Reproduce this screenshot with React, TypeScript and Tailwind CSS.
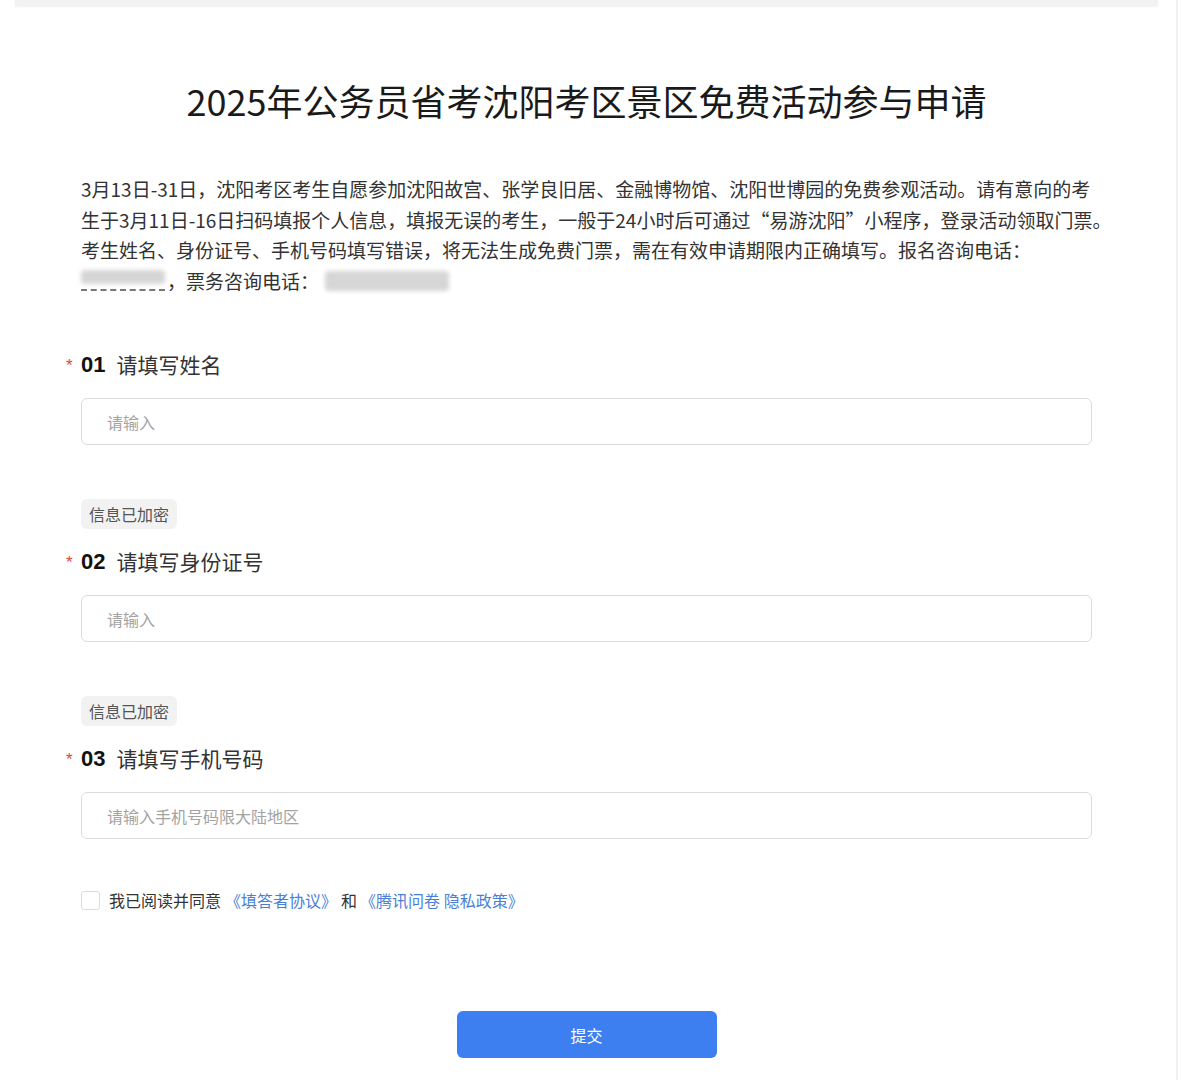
const font = { fontFamily: '"Noto Sans CJK SC", "Noto Sans", sans-serif' };

const Blur = ({ className }: { className: string }) => (
  <span className={`inline-block rounded-sm bg-[#d6d6d6] blur-[2px] align-middle ${className}`} />
);

const Question = ({
  no,
  label,
  placeholder,
  encrypted,
}: {
  no: string;
  label: string;
  placeholder: string;
  encrypted?: boolean;
}) => (
  <div className="flex flex-col">
    {encrypted && (
      <div className="mb-[17px] flex">
        <span className="flex h-[30px] items-center rounded-md bg-[#f2f2f2] px-2 text-[16px] text-[#555]">
          信息已加密
        </span>
      </div>
    )}
    <div className="-ml-[15px] flex h-[30px] items-center">
      <span
        className="mt-[2px] w-[15px] text-[17px] text-[#e0463a]"
        style={{ fontFamily: '"Liberation Sans", sans-serif' }}
      >
        *
      </span>
      <span
        className="mr-[11px] text-[22px] font-bold text-[#111]"
        style={{ fontFamily: '"Liberation Sans", sans-serif' }}
      >
        {no}
      </span>
      <span className="text-[21px] text-[#333]">{label}</span>
    </div>
    <div className="mt-[19px] flex h-[47px] items-center rounded-md border border-[#dcdcdc] px-[25px] text-[16px] text-[#a3a3a3]">
      {placeholder}
    </div>
  </div>
);

export default function App() {
  return (
    <div className="relative min-h-[1080px] w-full bg-white" style={font}>
      <div className="ml-[15px] h-[6px] w-[1143px] bg-[#f2f2f2] shadow-[0_1px_2px_rgba(0,0,0,0.06)]" />
      <div className="absolute right-[3px] top-0 h-full w-[2px] bg-[#efefef]" />

      <div className="mx-[81px] flex w-[1011px] flex-col">
        <h1 className="mt-[68px] text-center text-[36px] leading-[52px] font-normal text-[#1a1a1a]">
          2025年公务员省考沈阳考区景区免费活动参与申请
        </h1>

        <div className="mt-[48px] whitespace-nowrap text-[19px] leading-[30.6px] text-[#333]">
          <div>3月13日-31日，沈阳考区考生自愿参加沈阳故宫、张学良旧居、金融博物馆、沈阳世博园的免费参观活动。请有意向的考</div>
          <div>生于3月11日-16日扫码填报个人信息，填报无误的考生，一般于24小时后可通过“易游沈阳”小程序，登录活动领取门票。</div>
          <div>考生姓名、身份证号、手机号码填写错误，将无法生成免费门票，需在有效申请期限内正确填写。报名咨询电话：</div>
          <div className="flex items-center">
            <span className="relative inline-block h-[24px] w-[86px]">
              <Blur className="absolute left-0 top-[1px] h-[14px] w-[84px]" />
              <span className="absolute bottom-[2px] left-0 w-[84px] border-b-2 border-dashed border-[#777]" />
            </span>
            <span>，票务咨询电话：</span>
            <Blur className="ml-[6px] h-[20px] w-[124px]" />
          </div>
        </div>

        <div className="mt-[53px] flex flex-col gap-[54px]">
          <Question no="01" label="请填写姓名" placeholder="请输入" />
          <Question no="02" label="请填写身份证号" placeholder="请输入" encrypted />
          <Question no="03" label="请填写手机号码" placeholder="请输入手机号码限大陆地区" encrypted />
        </div>

        <div className="mt-[51px] flex h-[20px] items-center text-[16px]">
          <span className="mr-[9px] h-[19px] w-[19px] rounded-[3px] border border-[#dcdcdc] bg-white" />
          <span className="text-[#333]">我已阅读并同意</span>
          <span className="ml-[4px] text-[#4a7fd8]">《填答者协议》</span>
          <span className="ml-[4px] text-[#333]">和</span>
          <span className="ml-[3px] text-[#4a7fd8]">《腾讯问卷 隐私政策》</span>
        </div>

        <div className="mt-[101px] flex justify-center pb-[22px]">
          <button
            type="button"
            className="h-[47px] w-[260px] rounded-md bg-[#3d7ff0] text-[16px] text-white"
          >
            提交
          </button>
        </div>
      </div>
    </div>
  );
}
